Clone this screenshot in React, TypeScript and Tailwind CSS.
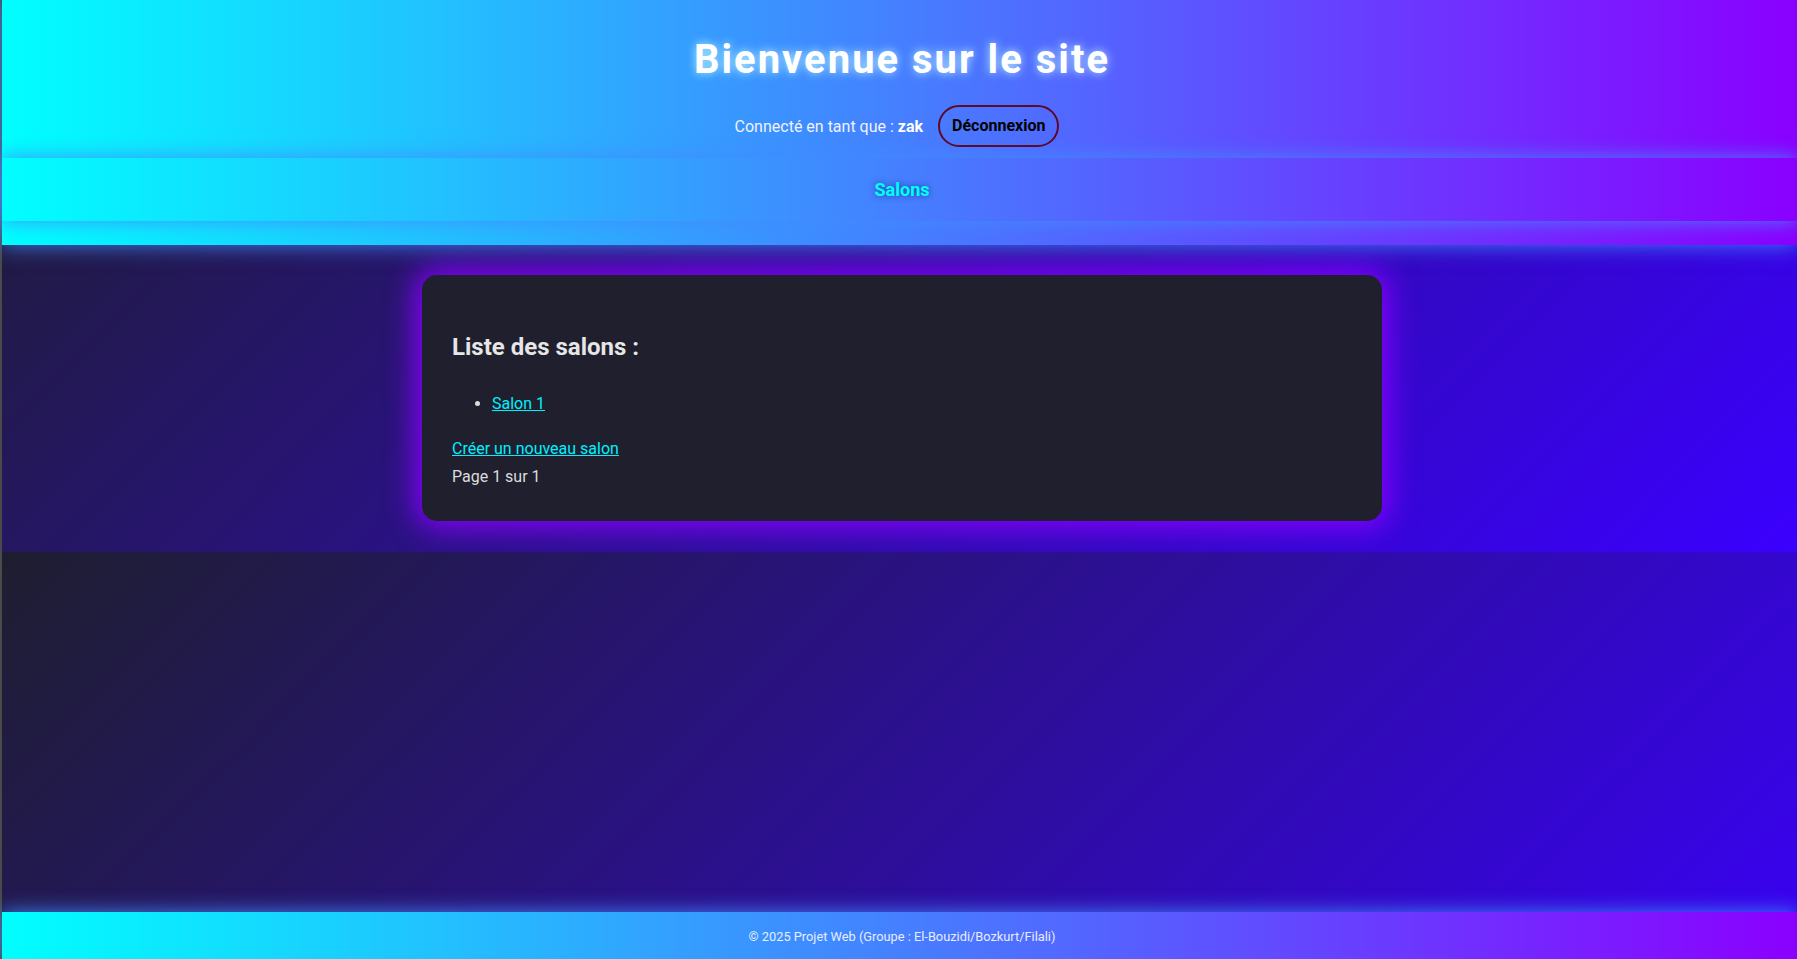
const bandGradient = "bg-[linear-gradient(to_right,#00ffff,#8a00ff)]";

export default function App() {
  return (
    <div className="min-h-screen flex flex-col border-l-2 border-[#4a4a4a] font-['Roboto',sans-serif] text-[16px]">
      {/* header + main share one gradient tile, the filler below repeats it */}
      <div className="bg-[linear-gradient(135deg,#1e1e2f,#3b00ff)]">
        <header className={`relative z-10 pb-[24px] shadow-[0_0_20px_rgba(64,140,255,0.9)] ${bandGradient}`}>
          <div className="flex flex-col items-center pt-[36px] pb-[11px] pl-[5px]">
            <h1 className="text-[40px] leading-[47px] font-bold tracking-[2px] text-white [text-shadow:0_0_10px_rgba(200,255,255,0.9)]">
              Bienvenue sur le site
            </h1>
            <div className="mt-[22px] flex h-[42px] items-center text-[#f2f2ff]">
              <span className="leading-[19px]">
                Connecté en tant que : <strong className="font-bold text-white">zak</strong>
              </span>
              <button className="ml-[15px] mr-[10px] rounded-full border-2 border-[#5c0a28] bg-transparent px-[12px] py-[10px] leading-[18px] font-bold text-black">
                Déconnexion
              </button>
            </div>
          </div>
          <nav className={`flex h-[63px] items-center justify-center pl-[5px] shadow-[0_0_18px_rgba(64,140,255,0.95)] ${bandGradient}`}>
            <a href="#" className="text-[18px] leading-[21px] font-bold text-[#00ffff] [text-shadow:0_0_6px_rgba(0,40,120,0.7)]">
              Salons
            </a>
          </nav>
        </header>

        <main className="pt-[30px] pb-[31px] pl-[5px]">
          <div className="mx-auto w-[960px] rounded-[15px] bg-[#1f1f2e] px-[30px] pt-[30px] pb-[35px] text-[#dcdcdc] shadow-[0_0_30px_6px_#8a00ff]">
            <h2 className="mt-[28px] text-[24px] leading-[28px] font-bold text-[#e6e6e6]">Liste des salons :</h2>
            <ul className="mt-[33px] list-disc pl-[40px] leading-[19px]">
              <li>
                <a href="#" className="text-[#00f0ff] underline">Salon 1</a>
              </li>
            </ul>
            <a href="#" className="mt-[26px] block w-fit leading-[19px] text-[#00f0ff] underline">
              Créer un nouveau salon
            </a>
            <p className="mt-[9px] leading-[19px]">Page 1 sur 1</p>
          </div>
        </main>
      </div>

      <div className="flex-1 bg-[linear-gradient(135deg,#1e1e2f,#3b00ff)] bg-[length:100%_552px] bg-no-repeat" />

      <footer className={`h-[47px] pt-[17px] pl-[5px] text-center shadow-[0_0_20px_rgba(64,140,255,0.9)] ${bandGradient}`}>
        <p className="text-[12.8px] leading-[15px] text-[#e8ecff]">
          © 2025 Projet Web (Groupe : El-Bouzidi/Bozkurt/Filali)
        </p>
      </footer>
    </div>
  );
}
